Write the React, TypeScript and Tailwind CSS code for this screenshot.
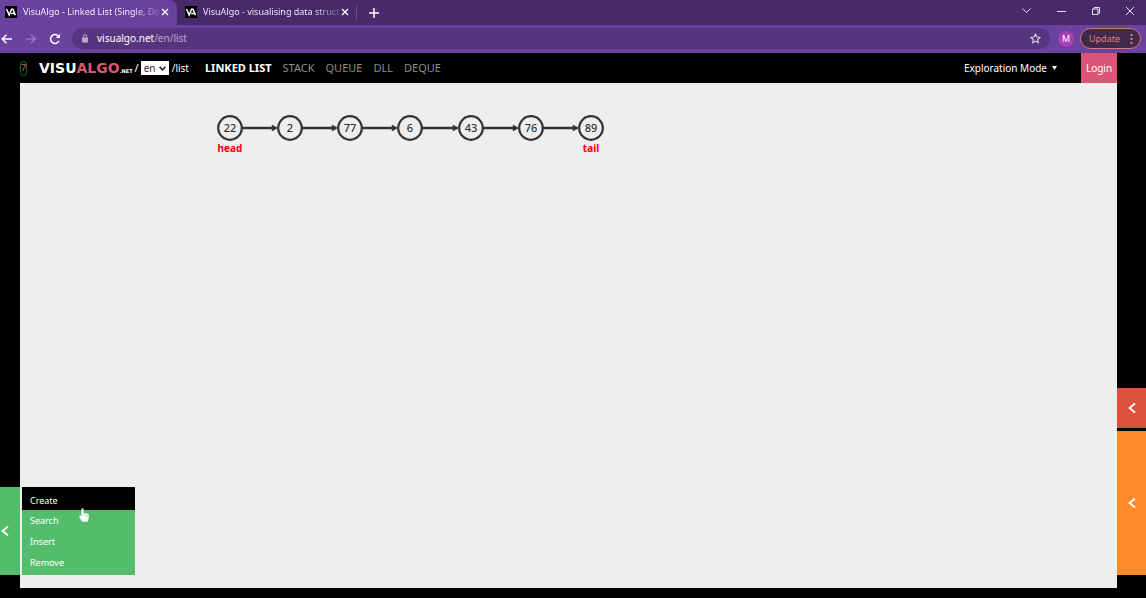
import React from "react";

const nodes = [
  { value: 22, x: 210 },
  { value: 2, x: 270 },
  { value: 77, x: 330 },
  { value: 6, x: 390 },
  { value: 43, x: 451 },
  { value: 76, x: 511 },
  { value: 89, x: 571 },
];

const actions = ["Search", "Insert", "Remove"];
const structures = ["STACK", "QUEUE", "DLL", "DEQUE"];

function Favicon() {
  return (
    <svg className="size-3 shrink-0" viewBox="0 0 12 12" aria-hidden="true">
      <rect width="12" height="12" fill="#000" />
      <path d="M1.500 3 4.200 9 6.500 3.200H8L10.400 9.200M6.200 7.400h3" fill="none" stroke="#fff" strokeWidth="1.5" />
    </svg>
  );
}

function Cross({ className }: { className: string }) {
  return (
    <svg className={className} viewBox="0 0 8 8" aria-hidden="true">
      <path d="M1 1l6 6M7 1L1 7" fill="none" stroke="currentColor" strokeWidth="1.3" />
    </svg>
  );
}

function Chevron({ className }: { className: string }) {
  return (
    <svg className={className} viewBox="0 0 8 12" aria-hidden="true">
      <path d="M7 1.5 1.5 6 7 10.5" fill="none" stroke="currentColor" strokeWidth="1.8" />
    </svg>
  );
}

function TabTitle({ children }: { children: string }) {
  return (
    <span className="ml-[6px] w-[136px] bg-linear-to-r from-white from-80% to-white/20 bg-clip-text whitespace-nowrap text-transparent">
      {children}
    </span>
  );
}

function TabStrip() {
  return (
    <div className="flex h-[25px] bg-[#482a6b] text-[9px] text-white">
      <div className="flex w-[177px] items-center rounded-tr-lg bg-[#6b419f] pb-px pl-[5px]">
        <Favicon />
        <TabTitle>VisuAlgo - Linked List (Single, Do</TabTitle>
        <button aria-label="Close tab" className="ml-[2px]">
          <Cross className="size-2" />
        </button>
      </div>
      <div className="flex w-[180px] items-center pb-px pl-[8px]">
        <Favicon />
        <TabTitle>VisuAlgo - visualising data struct</TabTitle>
        <button aria-label="Close tab" className="ml-[2px]">
          <Cross className="size-2" />
        </button>
        <span className="ml-auto h-[15px] w-px bg-[#6d5090]" />
      </div>
      <button aria-label="New tab" className="ml-3">
        <svg className="size-[10px]" viewBox="0 0 10 10" aria-hidden="true">
          <path d="M5 0v10M0 5h10" stroke="currentColor" strokeWidth="1.5" />
        </svg>
      </button>
      <div className="ml-auto flex items-center gap-[26px] pr-3 pb-1 text-[#e8e0f0]">
        <button aria-label="Search tabs">
          <svg className="h-[5px] w-[9px]" viewBox="0 0 9 5" aria-hidden="true">
            <path d="M.5.5l4 4 4-4" fill="none" stroke="currentColor" />
          </svg>
        </button>
        <button aria-label="Minimise">
          <svg className="h-2 w-[9px]" viewBox="0 0 9 8" aria-hidden="true">
            <path d="M0 4.5h9" stroke="currentColor" />
          </svg>
        </button>
        <button aria-label="Restore">
          <svg className="size-2" viewBox="0 0 8 8" aria-hidden="true">
            <path d="M.5 2h5.5v5.5h-5.5zM2 2V.5h5.5V6H6" fill="none" stroke="currentColor" />
          </svg>
        </button>
        <button aria-label="Close window">
          <svg className="size-2" viewBox="0 0 8 8" aria-hidden="true">
            <path d="M0 0l8 8M8 0L0 8" stroke="currentColor" />
          </svg>
        </button>
      </div>
    </div>
  );
}

function Toolbar() {
  return (
    <div className="flex h-7 items-center bg-[#6b419f] pr-[5px] pb-px pl-[1px] text-white">
      <button aria-label="Back">
        <svg className="h-[10px] w-[11px]" viewBox="0 0 11 10" aria-hidden="true">
          <path d="M5.5.8 1.200 5l4.300 4.200M1.200 5H11" fill="none" stroke="currentColor" strokeWidth="1.4" />
        </svg>
      </button>
      <button aria-label="Forward" className="ml-[14px] text-[#a78ac9]">
        <svg className="h-[10px] w-[10px]" viewBox="0 0 10 10" aria-hidden="true">
          <path d="M5 .8 9.200 5 5 9.200M9.200 5H0" fill="none" stroke="currentColor" strokeWidth="1.2" />
        </svg>
      </button>
      <button aria-label="Reload" className="ml-[13px]">
        <svg className="size-3" viewBox="0 0 12 12" aria-hidden="true">
          <path d="M10 7.800A4.400 4.400 0 1 1 9.200 3" fill="none" stroke="currentColor" strokeWidth="1.5" />
          <path d="M11 .8V5H6.800z" fill="currentColor" />
        </svg>
      </button>
      <div className="ml-[11px] flex h-[21px] flex-1 items-center rounded-full bg-[#57357e] pr-[9px] pl-[9px]">
        <svg className="h-[9px] w-2" viewBox="0 0 8 9" aria-hidden="true">
          <rect x="1" y="3.5" width="6" height="5" fill="#b9a8cb" />
          <path d="M2.300 4V2.300a1.700 1.700 0 0 1 3.400 0V4" fill="none" stroke="#b9a8cb" />
        </svg>
        <a href="#address" className="ml-2 text-[10px]">
          visualgo.net<span className="text-[#bba9ce]">/en/list</span>
        </a>
        <button aria-label="Bookmark" className="ml-auto">
          <svg className="size-[11px]" viewBox="0 0 12 12" aria-hidden="true">
            <path
              d="M6 1l1.500 3.300 3.500.4-2.600 2.400.7 3.600L6 8.900l-3.100 1.800.7-3.600L1 4.700l3.500-.4z"
              fill="none"
              stroke="#e2d8ec"
              strokeWidth="1.1"
            />
          </svg>
        </button>
      </div>
      <button className="ml-2 size-4 rounded-full bg-[#a93cb8] text-[9px] leading-4">M</button>
      <button className="ml-[6px] flex h-[21px] w-[61px] items-center justify-between rounded-full border border-[#d57d78] bg-[#40294a] pr-[7px] pl-2 text-[9px] text-[#e07f78]">
        Update
        <svg className="h-[10px] w-[3px]" viewBox="0 0 3 10" aria-hidden="true">
          <path d="M.5 0h2v2h-2zM.5 4h2v2h-2zM.5 8h2v2h-2z" fill="currentColor" />
        </svg>
      </button>
    </div>
  );
}

function SiteHeader() {
  return (
    <header className="flex h-[30px] items-center pl-5 text-[11px] text-white">
      <span className="flex h-[15px] w-[7px] items-center justify-center rounded-full border border-[#16701f] text-[9px] text-[#d95c70]">
        7
      </span>
      <a href="#home" className="ml-3 flex items-baseline font-['DejaVu_Sans'] text-[14px] font-bold">
        VISU<span className="text-[#d65775]">ALGO</span>
        <span className="text-[5px]">.NET</span>
      </a>
      <span className="ml-[2px]">/</span>
      <select
        aria-label="Language"
        defaultValue="en"
        className="ml-[2px] h-[14px] w-7 appearance-none bg-white pl-[3px] text-[10px] leading-[14px] text-[#333]"
      >
        <option>en</option>
      </select>
      <svg className="pointer-events-none -ml-[10px] h-[5px] w-[7px]" viewBox="0 0 7 5" aria-hidden="true">
        <path d="M.6.8 3.500 3.800 6.400.8" fill="none" stroke="#222" strokeWidth="1.5" />
      </svg>
      <span className="ml-[6px] text-[10px]">/list</span>
      <nav className="ml-[16px] flex gap-[11px] text-[#8d8d8d]">
        <a href="#list" className="font-bold text-white">
          LINKED LIST
        </a>
        {structures.map((s) => (
          <a key={s} href="#structure">
            {s}
          </a>
        ))}
      </nav>
      <button className="ml-auto flex items-center gap-[5px] text-[10px]">
        Exploration Mode
        <svg className="h-[4px] w-[5px]" viewBox="0 0 5 4" aria-hidden="true">
          <path d="M0 0h5L2.500 4z" fill="currentColor" />
        </svg>
      </button>
      <a
        href="#login"
        className="mr-[29px] ml-[24px] flex h-full w-[36px] items-center justify-center bg-[#d95576] text-[10px]"
      >
        Login
      </a>
    </header>
  );
}

function ListDiagram() {
  return (
    <svg className="mt-[28px] h-[50px] w-[620px]" viewBox="0 0 620 50" role="img" aria-label="Linked list">
      {nodes.slice(1).map((n, i) => (
        <g key={n.x} fill="#333" stroke="#333">
          <path d={`M${nodes[i].x + 12} 17H${n.x - 14}`} strokeWidth="2.4" />
          <path d={`M${n.x - 18} 14l5.500 3-5.500 3z`} strokeWidth=".5" />
        </g>
      ))}
      {nodes.map((n) => (
        <g key={n.x}>
          <circle cx={n.x} cy="17" r="11.800" fill="#eee" stroke="#333" strokeWidth="2.2" />
          <text x={n.x} y="21" textAnchor="middle" fontSize="11" fontWeight="500" fill="#333">
            {n.value}
          </text>
        </g>
      ))}
      <g fill="#f00" fontSize="10" fontWeight="700" textAnchor="middle">
        <text x="210" y="41">head</text>
        <text x="571" y="41">tail</text>
      </g>
    </svg>
  );
}

function HandCursor() {
  return (
    <svg className="absolute top-[21px] left-[57px] h-[14px] w-[10px]" viewBox="0 0 10 14" aria-hidden="true">
      <path
        d="M2.600 7.500V1.500a.9.900 0 0 1 1.800 0V5l4 .9q1.200.3 1.200 1.600V10L8.500 13.400h-5L.6 9.200q-.4-1.600 1-1.400l1 .8z"
        fill="#fff"
        stroke="#fff"
        strokeWidth=".4"
      />
      <path d="M4.500 5.500v2M6.500 6v2M8.200 6.500v2" stroke="#999" strokeWidth=".5" />
    </svg>
  );
}

export default function App() {
  return (
    <div className="flex min-h-screen flex-col bg-black font-['Noto_Sans',sans-serif]">
      <TabStrip />
      <Toolbar />
      <SiteHeader />
      <div className="flex flex-1 pb-[10px] text-white">
        <div className="flex w-5 flex-col justify-end pb-[13px]">
          <button aria-label="Toggle actions" className="flex h-[88px] items-center bg-[#54bd6b] pl-[1px]">
            <Chevron className="h-3 w-2" />
          </button>
        </div>
        <main className="flex min-w-0 flex-1 flex-col justify-between bg-[#eee]">
          <ListDiagram />
          <div className="relative mb-[13px] ml-[2px] flex h-[88px] w-[113px] flex-col bg-[#54bd6b] text-[9px]">
            <button className="h-[23px] bg-black pt-1 pl-2 text-left">Create</button>
            {actions.map((a) => (
              <button key={a} className="h-[21px] pl-2 text-left">
                {a}
              </button>
            ))}
            <HandCursor />
          </div>
        </main>
        <div className="flex w-[29px] flex-col justify-end gap-[3px] pb-[13px]">
          <button aria-label="Toggle status" className="flex h-10 items-center justify-center bg-[#dc513e]">
            <Chevron className="h-3 w-2" />
          </button>
          <button aria-label="Toggle code trace" className="flex h-[144px] items-center justify-center bg-[#ff8c28]">
            <Chevron className="h-3 w-2" />
          </button>
        </div>
      </div>
    </div>
  );
}
